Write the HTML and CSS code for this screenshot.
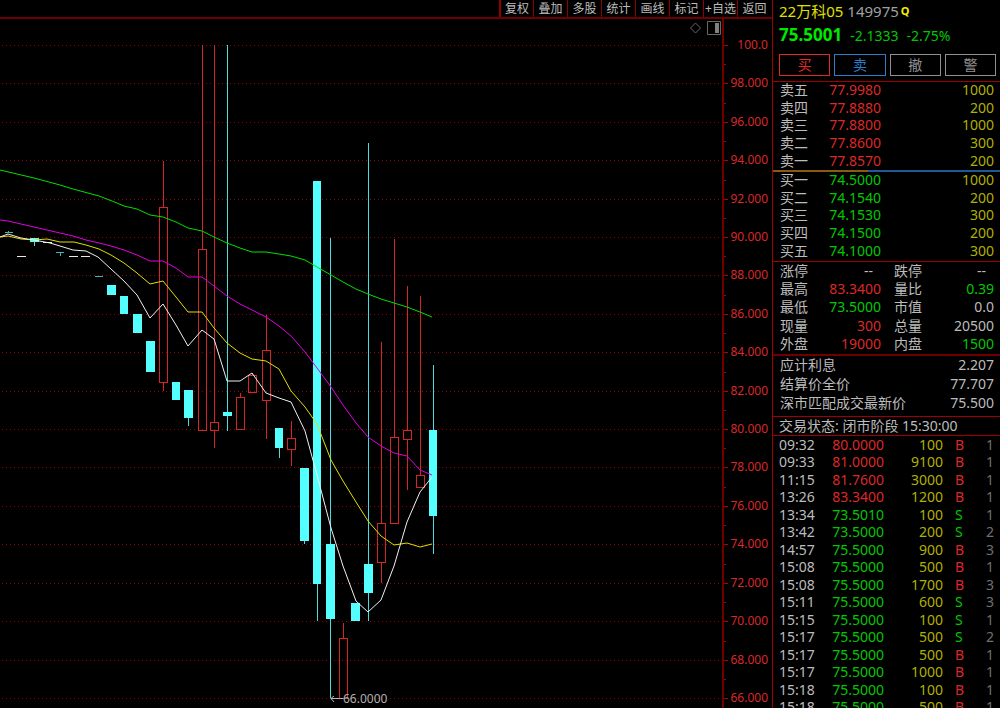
FILE: index.html
```html
<!DOCTYPE html>
<html lang="zh-CN">
<head>
<meta charset="utf-8">
<title>22万科05 149975</title>
<link rel="stylesheet" href="styles.css">
</head>
<body>
<div class="terminal">
  <main class="chart">
    <nav class="toolbar">
      <button>复权</button><button>叠加</button><button>多股</button><button>统计</button><button>画线</button><button>标记</button><button>+自选</button><button>返回</button>
    </nav>
    <svg class="plot" viewBox="0 19 772 689" role="img" aria-label="K线图">
      <path class="grid" d="M2 45.5H722M2 83.5H722M2 122.5H722M2 160.5H722M2 199.5H722M2 237.5H722M2 275.5H722M2 314.5H722M2 352.5H722M2 391.5H722M2 429.5H722M2 467.5H722M2 506.5H722M2 544.5H722M2 583.5H722M2 621.5H722M2 660.5H722M2 698.5H722"/>
      <path class="axis-line" d="M723 19V708"/>
      <path class="axis-tick" d="M724 45.5h4M724 83.5h4M724 122.5h4M724 160.5h4M724 199.5h4M724 237.5h4M724 275.5h4M724 314.5h4M724 352.5h4M724 391.5h4M724 429.5h4M724 467.5h4M724 506.5h4M724 544.5h4M724 583.5h4M724 621.5h4M724 660.5h4M724 698.5h4M724 64.5h2M724 103.5h2M724 141.5h2M724 180.5h2M724 218.5h2M724 256.5h2M724 295.5h2M724 333.5h2M724 372.5h2M724 410.5h2M724 448.5h2M724 487.5h2M724 525.5h2M724 564.5h2M724 602.5h2M724 641.5h2M724 679.5h2"/>
      <g class="axis-label">
        <text x="768" y="49">100.0</text><text x="768" y="87">98.000</text><text x="768" y="126">96.000</text><text x="768" y="164">94.000</text><text x="768" y="203">92.000</text><text x="768" y="241">90.000</text><text x="768" y="279">88.000</text><text x="768" y="318">86.000</text><text x="768" y="356">84.000</text><text x="768" y="395">82.000</text><text x="768" y="433">80.000</text><text x="768" y="471">78.000</text><text x="768" y="510">76.000</text><text x="768" y="548">74.000</text><text x="768" y="587">72.000</text><text x="768" y="625">70.000</text><text x="768" y="664">68.000</text><text x="768" y="702">66.000</text>
      </g>
      <path class="tool-outline" d="M695.5 23L700.500 28L695.500 33L690.500 28Z"/>
      <path class="tool-outline" d="M707.500 21.500H720.500V34.500H707.500Z"/>
      <path class="tool-fill" d="M715 23H719V33H715Z"/>
      <path class="flat" d="M17 256.500h9M43 242.500h9M69 256.500h9M81 256.500h9"/>
      <path class="flat-down" d="M5 232.500h8M8.500 231v2M56 252.500h8M60.500 253v3M95 276.500h8"/>
      <path class="wick-down" d="M34.500 238V246M188.500 418V426M227.500 45V431M279.500 448V458M304.500 541V544M317.500 181V621M330.500 238V698M368.500 143V621M433.500 365V554"/>
      <path class="body-down" d="M30 238h9v4h-9zM107 285h9v10h-9zM120 296h8v18h-8zM133 314h9v19h-9zM146 341h9v31h-9zM172 382h8v18h-8zM184 390h9v28h-9zM223 412h9v4h-9zM275 428h8v20h-8zM300 468h9v73h-9zM313 181h8v403h-8zM326 544h9v75h-9zM351 603h9v18h-9zM364 564h9v29h-9zM429 430h8v86h-8z"/>
      <path class="wick-up" d="M163.500 161V208M163.500 383V391M202.500 45V250M214.500 45V423M214.500 430V448M240.500 393V397M252.500 373V376M266.500 315V350M266.500 401V439M291.500 421V438M291.500 450V466M343.500 623V638M381.500 342V523M381.500 562V583M394.500 239V437M407.500 286V430M407.500 440V490M420.500 296V475"/>
      <path class="body-up" d="M159.500 207.500h8v175h-8zM198.500 249.500h8v181h-8zM210.500 422.500h8v8h-8zM236.500 397.500h8v32h-8zM248.500 375.500h8v17h-8zM262.500 350.500h8v50h-8zM287.500 438.500h8v11h-8zM339.500 638.500h8v60h-8zM377.500 523.500h8v39h-8zM390.500 437.500h8v86h-8zM403.500 430.500h8v9h-8zM416.500 475.500h8v12h-8z"/>
      <polyline class="ma ma-green" points="0,170 34,178 60,185 73,189 99,196 112,201 124,206 137,209 150,215 163,217 176,222 188,228 202,231 214,237 227,243 240,248 252,252 266,252 279,254 291,256 305,260 317,267 331,275 343,282 356,289 368,294 381,299 394,303 407,307 420,312 432,317"/>
      <polyline class="ma ma-magenta" points="0,220 8,221 34,227 60,233 73,236 86,240 99,243 111,246 124,250 137,255 150,261 163,261 176,268 188,277 202,277 214,286 227,296 240,304 252,310 266,317 279,326 291,336 305,352 317,368 331,387 343,405 356,423 368,437 381,446 394,453 407,456 420,470 432,475"/>
      <polyline class="ma ma-yellow" points="0,237 8,236 21,239 34,240 47,239 60,242 74,242 86,245 99,249 111,255 124,263 137,273 150,284 163,281 176,297 188,312 202,312 214,328 227,343 240,353 252,359 266,361 279,369 291,391 305,407 317,424 331,460 343,481 356,502 368,521 381,536 394,545 407,543 420,547 432,544"/>
      <polyline class="ma ma-white" points="0,237 8,234 21,238 34,240 50,243 60,246 73,250 86,251 98,257 111,269 124,281 137,295 150,318 163,304 176,325 188,346 202,330 214,339 227,381 240,381 252,373 266,393 279,398 291,402 305,431 317,475 331,528 343,566 356,601 368,612 381,600 394,566 407,522 420,492 432,477"/>
      <path class="low-arrow" d="M331 698.500H343M334 696L331 698.500L334 702"/>
      <text class="low-label" x="343" y="703">66.0000</text>
    </svg>
  </main>

  <aside class="quote">
    <header class="head">
      <h1 class="title"><span class="name">22万科05</span><span class="code">149975</span><span class="flag">Q</span></h1>
      <div class="last"><strong>75.5001</strong><span>-2.1333</span><span>-2.75%</span></div>
      <div class="actions"><button class="buy">买</button><button class="sell">卖</button><button>撤</button><button>警</button></div>
    </header>

    <table class="book asks">
      <tr><th>卖五</th><td class="up">77.9980</td><td class="vol">1000</td></tr>
      <tr><th>卖四</th><td class="up">77.8880</td><td class="vol">200</td></tr>
      <tr><th>卖三</th><td class="up">77.8800</td><td class="vol">1000</td></tr>
      <tr><th>卖二</th><td class="up">77.8600</td><td class="vol">300</td></tr>
      <tr><th>卖一</th><td class="up">77.8570</td><td class="vol">200</td></tr>
    </table>
    <div class="balance"></div>
    <table class="book bids">
      <tr><th>买一</th><td class="down">74.5000</td><td class="vol">1000</td></tr>
      <tr><th>买二</th><td class="down">74.1540</td><td class="vol">200</td></tr>
      <tr><th>买三</th><td class="down">74.1530</td><td class="vol">300</td></tr>
      <tr><th>买四</th><td class="down">74.1500</td><td class="vol">200</td></tr>
      <tr><th>买五</th><td class="down">74.1000</td><td class="vol">300</td></tr>
    </table>

    <section class="block">
      <table class="stats">
        <tr><th>涨停</th><td class="none">--</td><th>跌停</th><td class="none">--</td></tr>
        <tr><th>最高</th><td class="up">83.3400</td><th>量比</th><td class="down">0.39</td></tr>
        <tr><th>最低</th><td class="down">73.5000</td><th>市值</th><td>0.0</td></tr>
        <tr><th>现量</th><td class="up">300</td><th>总量</th><td>20500</td></tr>
        <tr><th>外盘</th><td class="up">19000</td><th>内盘</th><td class="down">1500</td></tr>
      </table>
    </section>

    <section class="block bond-block">
      <table class="bond">
        <tr><th>应计利息</th><td>2.207</td></tr>
        <tr><th>结算价全价</th><td>77.707</td></tr>
        <tr><th>深市匹配成交最新价</th><td>75.500</td></tr>
      </table>
    </section>

    <p class="status">交易状态: 闭市阶段 15:30:00</p>

    <section class="block tick-block">
      <table class="ticks">
        <tr><td>09:32</td><td class="up">80.0000</td><td class="vol">100</td><td class="up">B</td><td>1</td></tr>
        <tr><td>09:33</td><td class="up">81.0000</td><td class="vol">9100</td><td class="up">B</td><td>1</td></tr>
        <tr><td>11:15</td><td class="up">81.7600</td><td class="vol">3000</td><td class="up">B</td><td>1</td></tr>
        <tr><td>13:26</td><td class="up">83.3400</td><td class="vol">1200</td><td class="up">B</td><td>1</td></tr>
        <tr><td>13:34</td><td class="down">73.5010</td><td class="vol">100</td><td class="down">S</td><td>1</td></tr>
        <tr><td>13:42</td><td class="down">73.5000</td><td class="vol">200</td><td class="down">S</td><td>2</td></tr>
        <tr><td>14:57</td><td class="down">75.5000</td><td class="vol">900</td><td class="up">B</td><td>3</td></tr>
        <tr><td>15:08</td><td class="down">75.5000</td><td class="vol">500</td><td class="up">B</td><td>1</td></tr>
        <tr><td>15:08</td><td class="down">75.5000</td><td class="vol">1700</td><td class="up">B</td><td>3</td></tr>
        <tr><td>15:11</td><td class="down">75.5000</td><td class="vol">600</td><td class="down">S</td><td>3</td></tr>
        <tr><td>15:15</td><td class="down">75.5000</td><td class="vol">100</td><td class="down">S</td><td>1</td></tr>
        <tr><td>15:17</td><td class="down">75.5000</td><td class="vol">500</td><td class="down">S</td><td>2</td></tr>
        <tr><td>15:17</td><td class="down">75.5000</td><td class="vol">500</td><td class="up">B</td><td>1</td></tr>
        <tr><td>15:17</td><td class="down">75.5000</td><td class="vol">1000</td><td class="up">B</td><td>1</td></tr>
        <tr><td>15:18</td><td class="down">75.5000</td><td class="vol">100</td><td class="up">B</td><td>1</td></tr>
        <tr><td>15:18</td><td class="down">75.5000</td><td class="vol">500</td><td class="up">B</td><td>1</td></tr>
      </table>
    </section>
  </aside>
</div>
</body>
</html>
```
FILE: styles.css
```css
* { box-sizing: border-box; }

body {
  margin: 0;
  background: #000;
  color: #bcbcbc;
  font-family: "Noto Sans", "Noto Sans CJK SC", sans-serif;
  font-size: 14px;
  line-height: 16px;
}

button {
  margin: 0;
  padding: 0;
  background: #000;
  color: inherit;
  font-family: inherit;
  cursor: pointer;
}

.terminal {
  display: grid;
  grid-template-columns: minmax(0, 1fr) 228px;
  height: 100vh;
  overflow: hidden;
}

/* Chart */
.chart { min-width: 0; }

.toolbar {
  display: flex;
  justify-content: flex-end;
  height: 19px;
  padding-right: 1px;
  border-bottom: 2px solid #700000;
}

.toolbar button {
  width: 34px;
  border: 0;
  border-left: 1px solid #900000;
  font-size: 12px;
  line-height: 16px;
  white-space: nowrap;
  overflow: hidden;
}

.toolbar button:first-child { border-left: 2px solid #900000; }

.plot { display: block; width: 100%; }

.grid { stroke: #960000; stroke-dasharray: 1 3; shape-rendering: crispEdges; }
.axis-line { stroke: #700000; stroke-width: 2; }
.axis-tick { stroke: #b00000; shape-rendering: crispEdges; }
.axis-label { fill: #d82828; font-size: 12px; text-anchor: end; }

.tool-outline { fill: none; stroke: #686868; }
.tool-fill { fill: #808080; }

.flat, .flat-down, .wick-up, .wick-down, .body-up {
  fill: none;
  shape-rendering: crispEdges;
}
.flat { stroke: #e8e8e8; }
.flat-down { stroke: #3cb8b8; }
.wick-down { stroke: #48dcdc; }
.body-down { fill: #54ffff; }
.wick-up, .body-up { stroke: #d42626; }

.ma { fill: none; stroke-width: 1; }
.ma-green { stroke: #00e000; }
.ma-magenta { stroke: #e000e0; }
.ma-yellow { stroke: #e0e000; }
.ma-white { stroke: #f0f0f0; }

.low-arrow { fill: none; stroke: #b8b8b8; }
.low-label { fill: #b0b0b0; font-size: 12px; }

/* Quote panel */
.quote {
  border-left: 1px solid #a00000;
  overflow: hidden;
}

.head { padding: 2px 4px 5px 6px; border-bottom: 1px solid #a00000; }

.title {
  display: flex;
  margin: 0;
  font-size: 15px;
  font-weight: 400;
  line-height: 19px;
}
.name { color: #e0e000; }
.code { margin-left: 4px; color: #a0a0a0; }
.flag { margin-left: 2px; color: #f0f000; font-size: 11px; font-weight: 700; line-height: 17px; }

.last {
  display: flex;
  gap: 8px;
  align-items: baseline;
  margin-top: 3px;
  color: #00c800;
  line-height: 22px;
}
.last strong { color: #00e800; font-size: 17px; }

.actions {
  display: grid;
  grid-template-columns: repeat(4, 1fr);
  gap: 4px;
  margin-top: 7px;
}
.actions button {
  height: 22px;
  border: 1px solid #909090;
  color: #909090;
  font-size: 14px;
  line-height: 18px;
}
.actions .buy { border-color: #e02828; color: #e02828; }
.actions .sell { border-color: #2c7cc8; color: #2c7cc8; }

table {
  width: 100%;
  table-layout: fixed;
  border-collapse: collapse;
}
th, td { padding: 0; font-weight: 400; white-space: nowrap; }
th { text-align: left; }
td { text-align: right; }

.up { color: #dc2828; }
.down { color: #00c800; }
.vol { color: #b0b000; }

.book { height: 88px; }
.book th, .book td, .stats th, .stats td { padding-bottom: 1px; }
.bids { margin-bottom: 1px; }
.book th { width: 52px; padding-left: 7px; }
.book td:nth-child(2) { width: 56px; }
.book td:last-child { padding-right: 6px; }

.balance {
  height: 2px;
  background: linear-gradient(90deg, #8a5a10 42%, #1d5a94 42%);
}

.block { border-top: 1px solid #a00000; }

.stats { height: 92px; }
.stats th { width: 48px; padding-left: 7px; }
.stats th:nth-child(3) { width: 48px; padding-left: 13px; }
.stats td:nth-child(2) { width: 60px; }
.stats td:last-child { padding-right: 6px; }
.stats .none { padding-right: 8px; }
.stats .none:last-child { padding-right: 14px; }

.bond-block { height: 62px; border-top-width: 2px; border-top-color: #700000; }
.bond { height: 56px; }
.bond th { width: 150px; padding-left: 7px; }
.bond td { padding-right: 6px; }

.status {
  margin: 0;
  padding-left: 6px;
  border-top: 1px solid #a00000;
  line-height: 18px;
}

.ticks { height: 280px; }
.ticks td:nth-child(1) { width: 46px; padding-left: 6px; text-align: left; }
.ticks td:nth-child(2) { width: 65px; }
.ticks td:nth-child(3) { width: 59px; }
.ticks td:nth-child(4) { width: 28px; padding-left: 12px; text-align: left; }
.ticks td:nth-child(5) { padding-right: 6px; color: #707070; }
```
